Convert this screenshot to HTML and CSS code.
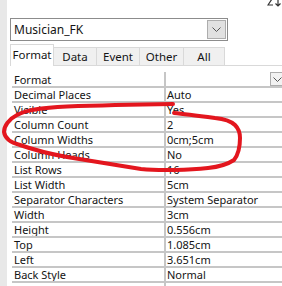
FILE: index.html
```html
<!DOCTYPE html>
<html lang="en">
<head>
    <meta charset="UTF-8">
    <title>Property Sheet</title>
    <link rel="stylesheet" href="styles.css">
</head>
<body>
    <div class="pane">
        <div class="strip"></div>
        <div class="main">
            <div class="topbar">
                <svg class="sort-icon" width="16" height="8" viewBox="0 0 16 8">
                    <path d="M5 -1 L1 5 H6" fill="none" stroke="#333" stroke-width="1.2"/>
                    <path d="M11 -1 V6 M8.5 3.5 L11 6 L13.5 3.5" fill="none" stroke="#333" stroke-width="1.2"/>
                </svg>
            </div>

            <div class="combo">
                <span class="combo-text">Musician_FK</span>
                <div class="combo-btn">
                    <svg width="9" height="5" viewBox="0 0 9 5"><path d="M0.5 0.5 L4.5 4.5 L8.5 0.5" fill="none" stroke="#555" stroke-width="1"/></svg>
                </div>
            </div>

            <div class="tabs">
                <div class="tab active">Format</div>
                <div class="tab">Data</div>
                <div class="tab">Event</div>
                <div class="tab">Other</div>
                <div class="tab">All</div>
            </div>

            <div class="grid">
                <div class="row first">
                    <div class="label">Format</div>
                    <div class="value">
                        <div class="drop">
                            <svg width="9" height="5" viewBox="0 0 9 5"><path d="M0.5 0.5 L4.5 4.5 L8.5 0.5" fill="none" stroke="#555" stroke-width="1"/></svg>
                        </div>
                    </div>
                </div>
                <div class="row"><div class="label">Decimal Places</div><div class="value">Auto</div></div>
                <div class="row"><div class="label">Visible</div><div class="value">Yes</div></div>
                <div class="row"><div class="label">Column Count</div><div class="value">2</div></div>
                <div class="row"><div class="label">Column Widths</div><div class="value">0cm;5cm</div></div>
                <div class="row"><div class="label">Column Heads</div><div class="value">No</div></div>
                <div class="row"><div class="label">List Rows</div><div class="value">16</div></div>
                <div class="row"><div class="label">List Width</div><div class="value">5cm</div></div>
                <div class="row"><div class="label">Separator Characters</div><div class="value">System Separator</div></div>
                <div class="row"><div class="label">Width</div><div class="value">3cm</div></div>
                <div class="row"><div class="label">Height</div><div class="value">0.556cm</div></div>
                <div class="row"><div class="label">Top</div><div class="value">1.085cm</div></div>
                <div class="row"><div class="label">Left</div><div class="value">3.651cm</div></div>
                <div class="row"><div class="label">Back Style</div><div class="value">Normal</div></div>
                <div class="row tail"><div class="label"></div><div class="value"></div></div>
            </div>
        </div>
    </div>

    <!-- red hand-drawn annotation over the sheet -->
    <svg class="scribble" width="282" height="286" viewBox="0 0 282 286">
        <path d="M173 104 C140 104.5 95 105.5 67 106.5 C45 107.5 25 110 17 115 C9 119 4 126 4 132 C5 139 12 143 20 145 C30 148.5 45 153 67 157 C85 160 115 165 141 169 C160 171 190 170 208 168 C218 167 228 164 234 160 C238 155 240 146 240 138 C240 131 238 128 235 125 C231 121 225 119 215 118 C200 116 185 114 174 113"
              fill="none" stroke="#e3161e" stroke-width="4" stroke-linecap="round"/>
    </svg>
</body>
</html>
```

FILE: styles.css
```css
body {
    margin: 0;
    padding: 0;
    width: 282px;
    height: 286px;
    overflow: hidden;
    background-color: #fff;
    font-family: "Noto Sans", "Open Sans", sans-serif;
    font-size: 11px;
    color: #141414;
}

.pane {
    display: flex;
    height: 286px;
}
.strip {
    width: 7px;
    background-color: #e8e8e8;
}
.main {
    flex: 1;
    padding-left: 3px;
    overflow: hidden;
}

.topbar {
    height: 18px;
    display: flex;
    justify-content: flex-end;
    align-items: flex-start;
}
.sort-icon {
    display: block;
    margin-right: -1px;
}

.combo {
    width: 212px;
    height: 21px;
    border: 1px solid #8c8c8c;
    display: flex;
    align-items: center;
    justify-content: space-between;
    padding-left: 3px;
    padding-right: 1px;
    box-sizing: content-box;
    font-size: 12px;
}
.combo-btn {
    width: 17px;
    height: 17px;
    border: 1px solid #adadad;
    background-color: #e1e1e1;
    display: flex;
    align-items: center;
    justify-content: center;
}

.tabs {
    display: flex;
    align-items: flex-end;
    margin-top: 3px;
    height: 21px;
    border-bottom: 1px solid #d9d9d9;
    width: 272px;
    font-size: 11.5px;
}
.tab {
    height: 17px;
    line-height: 17px;
    text-align: center;
    background-color: #f0f0f0;
    border: 1px solid #d9d9d9;
    border-bottom: none;
    border-left: none;
    width: 42px;
}
.tab.active {
    height: 21px;
    line-height: 19px;
    background-color: #fff;
    border-left: 1px solid #d9d9d9;
    margin-bottom: -1px;
}
.tab:nth-child(4) {
    width: 43px;
}
.tab:nth-child(5) {
    width: 40px;
}

.grid {
    margin-left: 2px;
}
.row {
    display: flex;
    height: 13px;
    border-bottom: 2px solid #c6c6c6;
    line-height: 13px;
}
.row.first {
    height: 20px;
}
.row.first .label {
    padding-top: 7px;
}
.row.first .value {
    margin-top: 6px;
    justify-content: flex-end;
}
.row.tail {
    border-bottom: none;
    height: 10px;
}
.label {
    width: 150px;
    padding-left: 2px;
    white-space: nowrap;
    overflow: hidden;
}
.value {
    flex: 1;
    display: flex;
    border-left: 2px solid #c6c6c6;
    padding-left: 1px;
    white-space: nowrap;
}
.drop {
    width: 13px;
    height: 12px;
    border: 1px solid #adadad;
    background-color: #f2f2f2;
    display: flex;
    align-items: center;
    justify-content: center;
    margin-right: -3px;
}

.scribble {
    position: absolute;
    left: 0;
    top: 0;
    pointer-events: none;
}
```
